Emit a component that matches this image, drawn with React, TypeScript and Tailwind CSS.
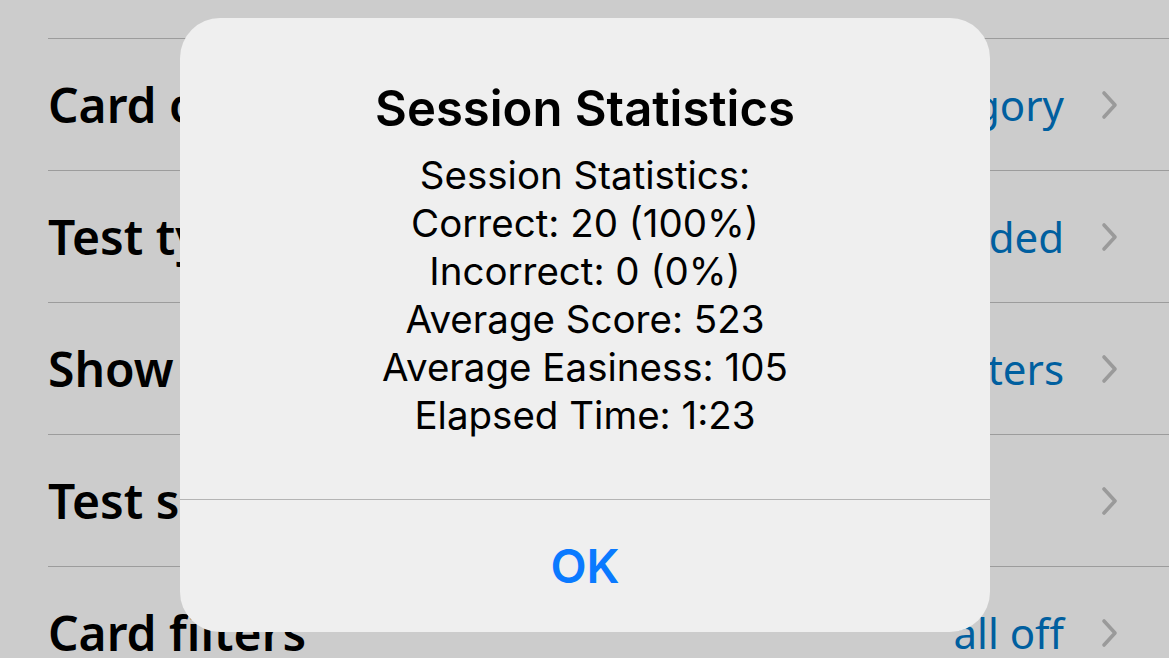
const rows = [
  { label: "Card order", value: "By category" },
  { label: "Test type", value: "Graded" },
  { label: "Show", value: "All characters" },
  { label: "Test settings", value: "" },
  { label: "Card filters", value: "all off" },
];

const stats = [
  "Session Statistics:",
  "Correct: 20 (100%)",
  "Incorrect: 0 (0%)",
  "Average Score: 523",
  "Average Easiness: 105",
  "Elapsed Time: 1:23",
];

function Chevron() {
  return (
    <svg viewBox="0 0 20 30" className="h-[30px] w-[20px]" fill="none">
      <path d="M4 3l11 12-11 12" stroke="#9a9a9a" strokeWidth="3.6" strokeLinecap="round" strokeLinejoin="round" />
    </svg>
  );
}

export default function App() {
  return (
    <div className="relative h-[658px] w-[1169px] overflow-hidden bg-[#cccccc] font-['Noto_Sans',sans-serif]">
      {/* settings list behind the alert */}
      <div className="pl-12 pt-[38px]">
        {rows.map((r) => (
          <div key={r.label} className="flex h-[132px] items-center border-t border-[#9c9c9c] pr-[49px]">
            <span className="flex-1 text-[48px] font-semibold text-black">{r.label}</span>
            <span className="text-[42px] text-[#005f9f]">{r.value}</span>
            <span className="ml-[36px]">
              <Chevron />
            </span>
          </div>
        ))}
      </div>

      {/* alert */}
      <div className="absolute left-[180px] top-[18px] flex h-[614px] w-[810px] flex-col rounded-[40px] bg-[#efefef] font-['Inter',sans-serif]">
        <div className="flex flex-1 flex-col items-center pt-[62px]">
          <h1 className="text-[49px] leading-[58px] font-semibold text-black">Session Statistics</h1>
          <div className="mt-[13px] flex flex-col items-center text-[38.5px] leading-[48px] text-black">
            {stats.map((s) => (
              <span key={s}>{s}</span>
            ))}
          </div>
        </div>
        <div className="flex h-[133px] items-center justify-center border-t border-[#b4b4b4]">
          <span className="text-[47px] font-semibold text-[#0a7aff]">OK</span>
        </div>
      </div>
    </div>
  );
}
